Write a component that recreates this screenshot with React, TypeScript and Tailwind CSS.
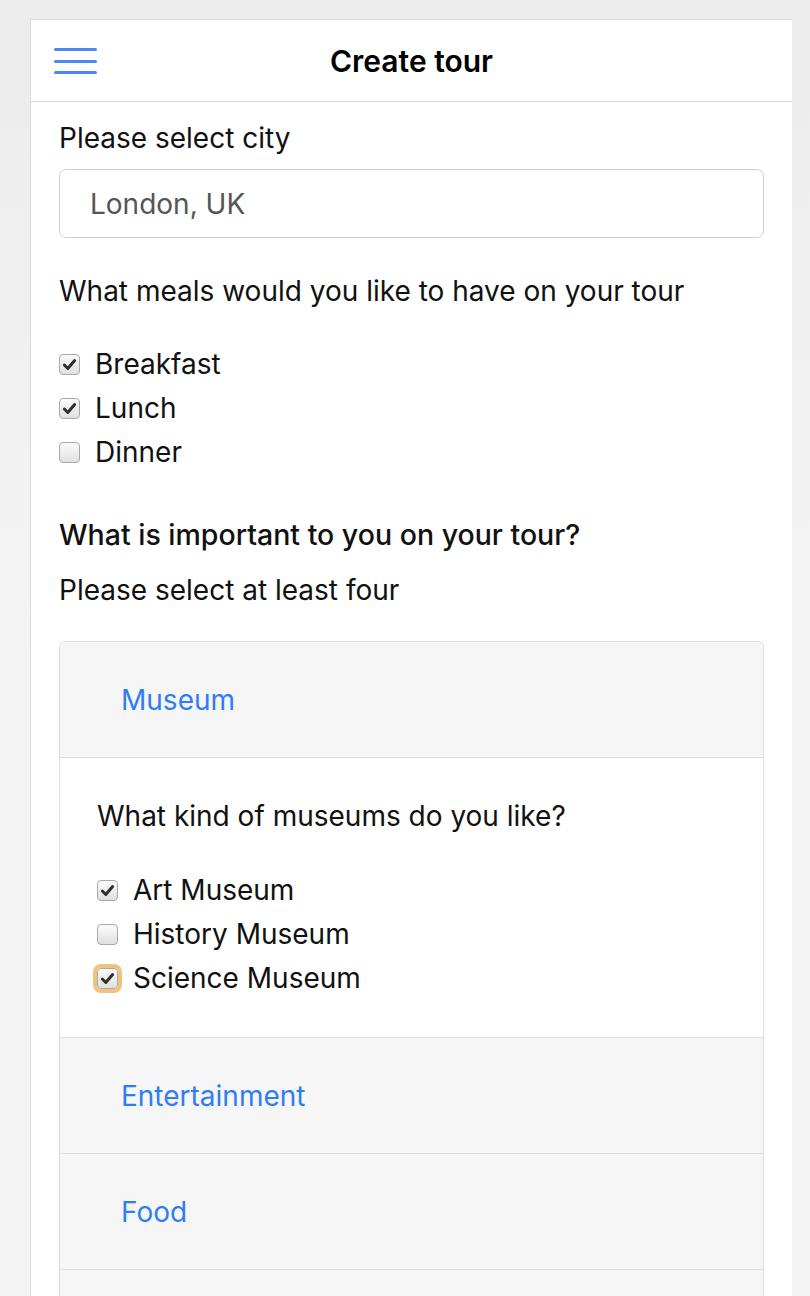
import React from "react";

type Option = { label: string; checked: boolean; focused?: boolean };

const MEALS: Option[] = [
  { label: "Breakfast", checked: true },
  { label: "Lunch", checked: true },
  { label: "Dinner", checked: false },
];

const MUSEUMS: Option[] = [
  { label: "Art Museum", checked: true },
  { label: "History Museum", checked: false },
  { label: "Science Museum", checked: true, focused: true },
];

function Checkbox({ checked, focused }: { checked: boolean; focused?: boolean }) {
  return (
    <span
      className={`relative flex items-center justify-center w-[21px] h-[21px] rounded-[4px] border border-[#a9a9a9] bg-gradient-to-b from-[#fbfbfb] to-[#e0e0e0] shrink-0 ${
        focused ? "ring-[4px] ring-[#f2c27a]" : ""
      }`}
    >
      {checked && (
        <svg viewBox="0 0 16 16" className="w-[15px] h-[15px]">
          <path d="M2.5 8.5 L6.2 12.2 L13.5 3.8" fill="none" stroke="#2f2f2f" strokeWidth="3.2" strokeLinecap="round" strokeLinejoin="round" />
        </svg>
      )}
    </span>
  );
}

function CheckRow({ opt }: { opt: Option }) {
  return (
    <label className="flex items-center gap-[15px] h-[44px]">
      <Checkbox checked={opt.checked} focused={opt.focused} />
      <span>{opt.label}</span>
    </label>
  );
}

function AccordionHeader({ title }: { title?: string }) {
  return (
    <div className="h-[116px] flex items-center pl-[61px] bg-[#f6f6f6] border-b border-[#dedede] text-[#2f7df6] text-[28px]">
      {title}
    </div>
  );
}

export default function App() {
  return (
    <div
      className="min-h-screen bg-gradient-to-b from-[#ececec] to-[#f4f4f4] via-[#f4f4f4] pt-[19px] pl-[30px] pr-[18px] text-[#111] text-[28px] leading-[36px]"
      style={{ fontFamily: "Inter, 'Noto Sans', sans-serif" }}
    >
      <div className="bg-white border-l border-t border-[#dcdcdc] h-[1277px] overflow-hidden">
        <header className="relative h-[82px] flex items-center justify-center border-b border-[#d6d6d6]">
          <div className="absolute left-[23px] top-[28px] flex flex-col gap-[8.5px]">
            <span className="block w-[43px] h-[3px] rounded-full bg-[#4a87f5]" />
            <span className="block w-[43px] h-[3px] rounded-full bg-[#4a87f5]" />
            <span className="block w-[43px] h-[3px] rounded-full bg-[#4a87f5]" />
          </div>
          <h1 className="text-[30px] font-semibold text-black">Create tour</h1>
        </header>

        <div className="px-[28px] pt-[18px]">
          <p>Please select city</p>
          <div className="mt-[13px] h-[69px] rounded-[7px] border border-[#cfcfcf] flex items-center pl-[30px] text-[#555]">
            London, UK
          </div>

          <p className="mt-[35px]">What meals would you like to have on your tour</p>
          <div className="mt-[33px] flex flex-col">
            {MEALS.map((m) => (
              <CheckRow key={m.label} opt={m} />
            ))}
          </div>

          <p className="mt-[43px] font-medium text-[28.5px]">What is important to you on your tour?</p>
          <p className="mt-[19px]">Please select at least four</p>

          <div className="mt-[33px] border border-b-0 border-[#dedede] rounded-t-[6px] overflow-hidden">
            <AccordionHeader title="Museum" />
            <div className="pl-[37px] pt-[40px] pb-[37px] border-b border-[#dedede]">
              <p>What kind of museums do you like?</p>
              <div className="mt-[34px] flex flex-col">
                {MUSEUMS.map((m) => (
                  <CheckRow key={m.label} opt={m} />
                ))}
              </div>
            </div>
            <AccordionHeader title="Entertainment" />
            <AccordionHeader title="Food" />
            <AccordionHeader />
          </div>
        </div>
      </div>
    </div>
  );
}
